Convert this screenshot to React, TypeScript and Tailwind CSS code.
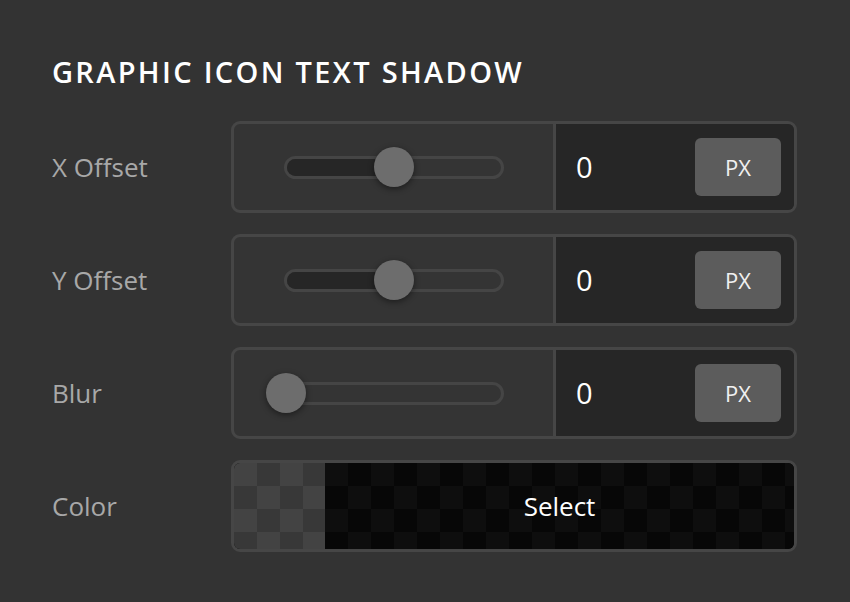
import React from "react";

const font = { fontFamily: '"Open Sans", "Noto Sans", sans-serif' };

function Slider({ pct }: { pct: number }) {
  const center = 2 + 216 * pct;
  return (
    <div className="flex-1 flex items-center justify-center">
      <div className="relative w-[220px] h-[23px]">
        <div className="absolute inset-0 rounded-full border-[3px] border-[#454545] bg-[#343434] overflow-hidden">
          <div className="h-full bg-[#262626]" style={{ width: center }} />
        </div>
        <div
          className="absolute top-1/2 -translate-y-1/2 -translate-x-1/2 w-[40px] h-[40px] rounded-full bg-[#6d6d6d] shadow-[0_2px_6px_rgba(0,0,0,0.45)]"
          style={{ left: center }}
        />
      </div>
    </div>
  );
}

function NumRow({ label, pct }: { label: string; pct: number }) {
  return (
    <div className="flex items-center">
      <div className="w-[179px] text-[26px] text-[#a8a8a8]">{label}</div>
      <div className="flex w-[566px] h-[92px] rounded-[9px] border-[3px] border-[#464646] overflow-hidden bg-[#343434]">
        <Slider pct={pct} />
        <div className="w-[3px] bg-[#464646]" />
        <div className="w-[238px] bg-[#262626] flex items-center pl-[20px] pr-[13px]">
          <div className="flex-1 text-[29px] text-white">0</div>
          <div className="w-[86px] h-[58px] rounded-[6px] bg-[#5c5c5c] flex items-center justify-center text-[22px] text-[#f0f0f0]">
            PX
          </div>
        </div>
      </div>
    </div>
  );
}

function ColorRow() {
  const rows = [0, 1, 2, 3];
  const leftCols = [0, 1, 2, 3];
  const rightCols = Array.from({ length: 21 }, (_, i) => i);
  return (
    <div className="flex items-center">
      <div className="w-[179px] text-[26px] text-[#a8a8a8]">Color</div>
      <div className="relative flex w-[566px] h-[92px] rounded-[9px] border-[3px] border-[#464646] overflow-hidden bg-[#0a0a0a]">
        <div className="w-[91px] flex flex-col overflow-hidden shrink-0">
          {rows.map((r) => (
            <div key={r} className="flex shrink-0">
              {leftCols.map((c) => (
                <div
                  key={c}
                  className={
                    (r + c) % 2 === 0
                      ? "w-[23px] h-[23px] shrink-0 bg-[#434343]"
                      : "w-[23px] h-[23px] shrink-0 bg-[#383838]"
                  }
                />
              ))}
            </div>
          ))}
        </div>
        <div className="flex-1 flex flex-col overflow-hidden">
          {rows.map((r) => (
            <div key={r} className="flex shrink-0">
              {rightCols.map((c) => (
                <div
                  key={c}
                  className={
                    (r + c) % 2 === 0
                      ? "w-[23px] h-[23px] shrink-0 bg-[#0e0e0e]"
                      : "w-[23px] h-[23px] shrink-0 bg-[#070707]"
                  }
                />
              ))}
            </div>
          ))}
        </div>
        <div className="absolute top-0 bottom-0 left-[91px] right-0 flex items-center justify-center text-[26px] text-white">
          Select
        </div>
      </div>
    </div>
  );
}

export default function App() {
  return (
    <div className="w-[850px] h-[602px] bg-[#333333] pl-[52px] pt-[54px]" style={font}>
      <div className="text-[29px] font-semibold tracking-[0.08em] text-white leading-[36px]">
        GRAPHIC ICON TEXT SHADOW
      </div>
      <div className="mt-[31px] flex flex-col gap-[21px]">
        <NumRow label="X Offset" pct={0.5} />
        <NumRow label="Y Offset" pct={0.5} />
        <NumRow label="Blur" pct={0} />
        <ColorRow />
      </div>
    </div>
  );
}
